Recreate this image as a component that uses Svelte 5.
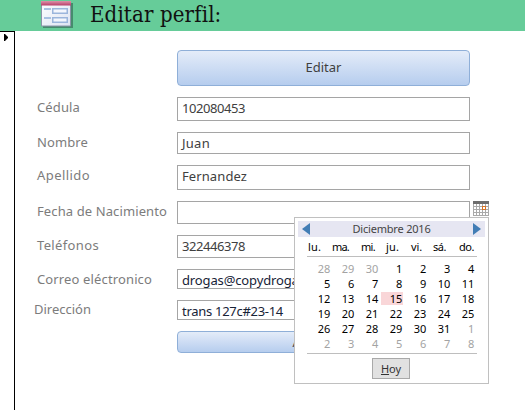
<script>
  const rows = [
    { label: 'Cédula', lw: 43, value: '102080453', vw: 63, gap: 11, h: 24, ly: 0, vy: 0 },
    { label: 'Nombre', lw: 51, value: 'Juan', vw: 28, gap: 11, h: 22, ly: 0, vy: 0 },
    { label: 'Apellido', lw: 53, value: 'Fernandez', vw: 65, gap: 11, h: 25, ly: 0, vy: 0 },
    { label: 'Fecha de Nacimiento', lw: 130, value: '', vw: 0, gap: 11, h: 23, ly: 0, vy: 0 },
    { label: 'Teléfonos', lw: 62, value: '322446378', vw: 63, gap: 11, h: 23, ly: 0, vy: 0 },
    { label: 'Correo eléctronico', lw: 115, value: 'drogas@copydrogas.com', vw: 152, gap: 11, h: 20, ly: 0, vy: 1, dark: true },
    { label: 'Dirección', lw: 57, value: 'trans 127c#23-14', vw: 101, gap: 11, h: 20, ly: -1, vy: 1, dark: true, shift: -3 }
  ];
  const weekdays = [['lu.', 24, 13], ['ma.', 29, 17], ['mi.', 25, 14], ['ju.', 25, 13], ['vi.', 22, 11], ['sá.', 26, 13], ['do.', 16, 15]];
  const days = [28, 29, 30, ...Array.from({ length: 31 }, (_, i) => i + 1), 1, 2, 3, 4, 5, 6, 7, 8];

  // Track the letters so that a label takes exactly the given width.
  function fit(node, width) {
    const natural = node.getBoundingClientRect().width;
    if (width) node.style.letterSpacing = `${(width - natural) / node.textContent.length}px`;
  }
</script>

<div class="window">
  <header>
    <svg class="logo" width="33" height="29" viewBox="0 0 33 29">
      <defs>
        <linearGradient id="paper" x2="1" y2="1"><stop stop-color="#fff" /><stop offset="1" stop-color="#dce3f2" /></linearGradient>
        <linearGradient id="bar" x2="0" y2="1"><stop stop-color="#dc93aa" /><stop offset="1" stop-color="#b83d68" /></linearGradient>
      </defs>
      <path d="M2 2h30v25H2z" fill="#315f50" opacity=".6" />
      <path d="M.5 0h29v25H.5z" fill="url(#paper)" stroke="#8a94a8" />
      <path d="M0 0h30v4.5H0z" fill="url(#bar)" />
      <path d="M3 8h7M3 17h7" stroke="#a9c1e2" stroke-width="2" />
      <path d="M11.75 7.75h14.5v4.5h-14.5zM11.75 16.75h14.5v4.5h-14.5z" fill="#f3f6fd" stroke="#9bb5dc" stroke-width="1.5" />
    </svg>
    <h1><span use:fit={131}>Editar perfil:</span></h1>
  </header>
  <main>
    <aside><svg width="4" height="7" viewBox="0 0 4 7"><path d="M0 0h1l3 3v1L1 7H0z" /></svg></aside>
    <form onsubmit={(e) => e.preventDefault()}>
      <button class="edit" type="button"><span use:fit={36}>Editar</span></button>
      {#each rows as r}
        <div class="row" style:height="{r.h}px" style:margin-top="{r.gap}px">
          <div class="label" style:margin-top="{r.ly}px" style:padding-left="{22 + (r.shift ?? 0)}px"><span use:fit={r.lw}>{r.label}</span></div>
          <div class="field" class:dark={r.dark} style:padding-top="{r.vy}px"><span use:fit={r.vw}>{r.value}</span></div>
          {#if r.label.startsWith('Fecha')}
            <svg class="cal" width="16" height="15" viewBox="0 0 16 15" shape-rendering="crispEdges">
              <path fill="#fff" d="M0 0h16v15H0z" />
              <path d="M.5 3v12M3.5 3v12M6.5 3v12M9.5 3v12M12.5 3v12M15.5 3v12M0 5.5h16M0 8.5h16M0 11.5h16M0 14.5h16" stroke="#aaa" />
              <path d="M0 0h16v3H0z" fill="#6d6d6d" />
              <path d="M9.5 5.5h3v3h-3z" fill="#fff" stroke="#d87325" />
            </svg>
          {/if}
        </div>
      {/each}
      <button class="update" type="button"><span use:fit={62}>Actualizar</span></button>
    </form>
  </main>

  <div class="popup">
    <div class="month">
      <svg width="8" height="12" viewBox="0 0 8 12"><path d="M8 0v12L0 6z" fill="#427db5" /></svg>
      <span use:fit={78}>Diciembre 2016</span>
      <svg width="8" height="12" viewBox="0 0 8 12"><path d="M0 0v12l8-6z" fill="#427db5" /></svg>
    </div>
    <div class="week">
      {#each weekdays as [d, w, tw]}<div style:width="{w}px"><span use:fit={tw}>{d}</span></div>{/each}
    </div>
    <div class="days">
      {#each days as d, i}<div class:other={i < 3 || i > 33} class:today={i === 17}>{d}</div>{/each}
    </div>
    <button class="hoy" type="button"><span use:fit={20}><u>H</u>oy</span></button>
  </div>
</div>

<style>
  .window { position: relative; width: 525px; height: 410px; overflow: hidden; background: #fff; font-family: "Noto Sans", "Open Sans", sans-serif; font-size: 13px; color: #444; }
  span { white-space: pre; }
  header { display: flex; height: 31px; background: #66cc99; box-sizing: border-box; padding-left: 41px; }
  .logo { margin-top: 1px; }
  h1 { margin: 0 0 0 16px; font: 22px/30px "DejaVu Serif Condensed", "DejaVu Serif", serif; font-stretch: condensed; color: #111; }
  main { display: flex; height: 379px; }
  aside { width: 15px; box-sizing: border-box; border-top: 1px solid #000; border-right: 1px solid #000; padding: 2px 0 0 4px; }
  aside svg { display: block; }
  form { display: flex; flex-direction: column; width: 480px; padding-top: 19px; }
  button { box-sizing: border-box; padding: 0; font: inherit; color: #3f3f3f; }
  .edit, .update { width: 293px; margin-left: 162px; border: 1px solid #8fafd8; border-radius: 4px; background: linear-gradient(#e4ecf9, #b6cdee); }
  .edit { height: 36px; flex: none; }
  .edit span { position: relative; top: -1px; }
  .update { height: 22px; margin-top: 11px; line-height: 18px; }
  .row { display: flex; flex: none; }
  .label { box-sizing: border-box; width: 162px; line-height: 20px; color: #7c7c7c; }
  .field { box-sizing: border-box; width: 293px; border: 1px solid #a5a5a5; padding-left: 4px; line-height: 20px; overflow: hidden; color: #404040; }
  .dark { color: #172337; line-height: 18px; }
  .cal { margin-left: 3px; }
  .popup { position: absolute; left: 294px; top: 217px; width: 195px; height: 167px; box-sizing: border-box; border: 1px solid #c0c0c0; background: #fff; padding: 3px; font-size: 11px; color: #000; }
  .month { display: flex; align-items: center; justify-content: space-between; height: 16px; padding: 0 4px; background: #e6e6f2; color: #444; line-height: 16px; }
  .week { display: flex; height: 19px; margin: 0 8px 0 9px; padding-left: 1px; border-bottom: 1px solid #bebebe; line-height: 19px; white-space: nowrap; }
  .week div { flex: none; }
  .days { display: grid; grid-template-columns: repeat(7, 24px); grid-auto-rows: 15px; margin: 0 8px 0 9px; padding: 4px 0 2px; border-bottom: 1px solid #bebebe; }
  .days div { height: 13px; margin: 1px 0 1px 2px; padding-right: 1px; line-height: 13px; text-align: right; letter-spacing: -.2px; }
  .days .other { color: #a3a3a3; }
  .days .today { background: #f9d6d8; }
  .hoy { display: block; width: 38px; height: 21px; margin: 4px auto 0 74px; border: 1px solid #a9a9a9; background: #e1e1e1; line-height: 19px; color: #333; }
</style>
